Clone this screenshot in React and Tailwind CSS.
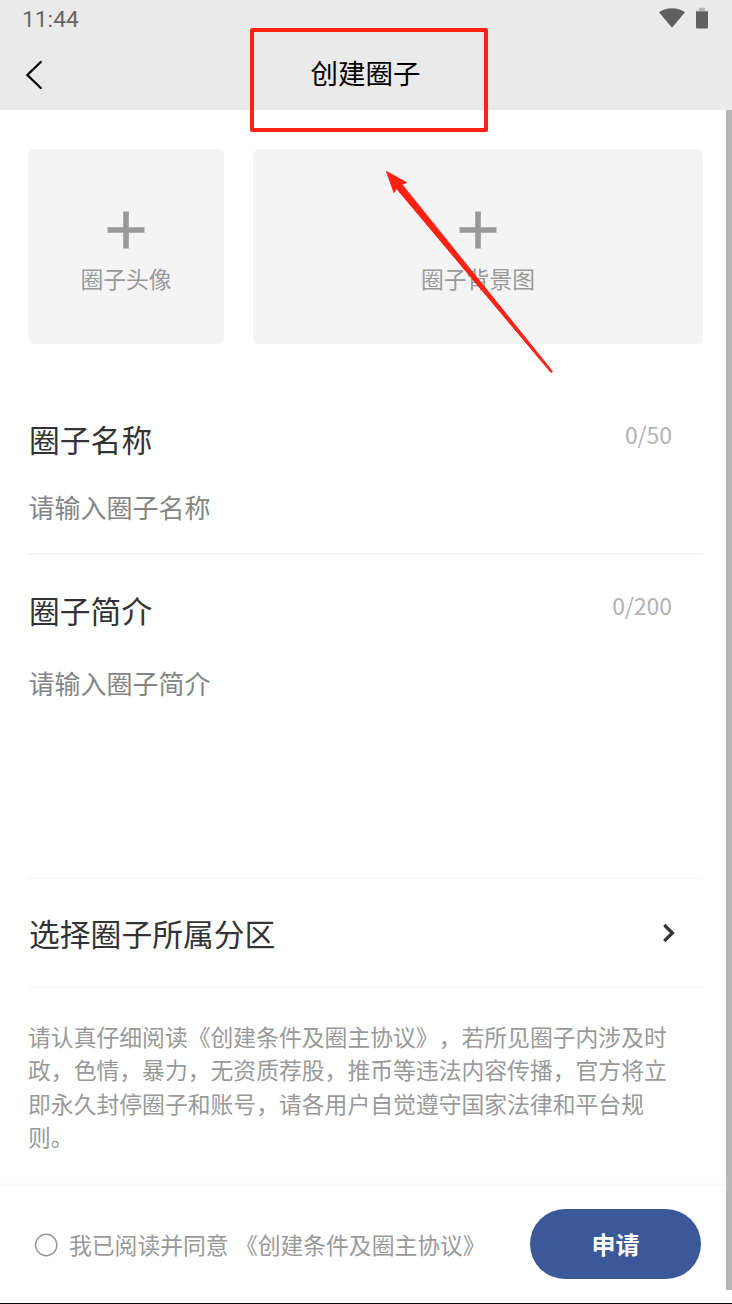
const UploadCard = ({ label, className }) => (
  <button className={`flex h-[195px] flex-col items-center rounded-md bg-[#f4f4f4] pt-[62px] text-[#999] ${className}`}>
    <svg width="38" height="38" viewBox="0 0 38 38" className="block">
      <path d="M19 .5v37M.5 19h37" stroke="#999" strokeWidth="5.6" />
    </svg>
    <span className="mt-[13px] text-[22.8px] leading-[34px]">{label}</span>
  </button>
);

const Field = ({ title, count, placeholder, className, gap }) => (
  <section className={className}>
    <div className="flex items-start justify-between pl-[1px] pr-[31px]">
      <h2 className="mt-[1px] text-[30.8px] leading-[44px] text-[#333]">{title}</h2>
      <span className="mt-[1px] text-[22.9px] leading-[34px] text-[#b2b2b2]">{count}</span>
    </div>
    <p className={`pl-[0.5px] text-[26px] leading-[38px] text-[#858585] ${gap}`}>{placeholder}</p>
  </section>
);

export default function App() {
  return (
    <div className="relative flex h-[1304px] w-[732px] flex-col overflow-hidden bg-white font-['Noto_Sans_CJK_SC',sans-serif] [text-spacing-trim:space-all]">
      <header className="h-[110px] shrink-0 bg-[#eaeaea]">
        <div className="flex h-[38px] items-center justify-between pl-[22px] pr-[24px]">
          <span className="mt-[2px] font-['Roboto',sans-serif] text-[22.8px] leading-[26px] text-[#666]">11:44</span>
          <div className="flex items-center gap-[11px]">
            <svg width="26" height="22" viewBox="0 0 26 22">
              <path d="M0 4.300C7.500-1 18.500-1 26 4.300L13 19.700Z" fill="#606060" />
            </svg>
            <svg width="12" height="24" viewBox="0 0 12 24">
              <path d="M3 .800h6v3h3v3H0v-3h3z" fill="#b5b5b5" />
              <path d="M0 4.500h12v16q0 1-1 1H1q-1 0-1-1z" fill="#606060" />
            </svg>
          </div>
        </div>
        <div className="grid h-[67px] grid-cols-[60px_1fr_61px] items-center">
          <svg width="18" height="30" viewBox="0 0 18 30" className="ml-[25px] mt-[6px]">
            <path d="M15.800 2 2.400 15 15.800 28" fill="none" stroke="#000" strokeWidth="2.300" strokeLinecap="round" />
          </svg>
          <h1 className="text-center text-[27.5px] leading-[40px] text-black">创建圈子</h1>
        </div>
      </header>

      <main className="flex h-[1071px] shrink-0 flex-col pl-[28px] pr-[29px] pt-[39px]">
        <div className="flex gap-[29px]">
          <UploadCard label="圈子头像" className="w-[196px]" />
          <UploadCard label="圈子背景图" className="flex-1" />
        </div>
        <Field title="圈子名称" count="0/50" placeholder="请输入圈子名称" className="mt-[72px] h-[139px] border-b-2 border-[#f4f4f4]" gap="mt-[27px]" />
        <Field title="圈子简介" count="0/200" placeholder="请输入圈子简介" className="h-[324px] border-b border-[#f1f1f1] pt-[32px]" gap="mt-[32px]" />
        <div className="flex h-[109px] items-center justify-between border-b border-[#f1f1f1] pl-[1px] pr-[27px]">
          <span className="text-[30.8px] leading-[44px] text-[#333]">选择圈子所属分区</span>
          <svg width="14" height="20" viewBox="0 0 14 20">
            <path d="M2.300 2 10.400 10 2.300 18" fill="none" stroke="#333" strokeWidth="3.200" />
          </svg>
        </div>
        <p className="mt-[32px] w-[645px] text-[22.82px] leading-[33.4px] text-[#999]">
          请认真仔细阅读《创建条件及圈主协议》，若所见圈子内涉及时政，色情，暴力，无资质荐股，推币等违法内容传播，官方将立即永久封停圈子和账号，请各用户自觉遵守国家法律和平台规则。
        </p>
      </main>

      <footer className="h-[122px] shrink-0">
        <div className="h-[5px] bg-linear-to-b from-white to-[#f5f7f7]" />
        <div className="flex h-[117px] items-center pl-[34px] pr-[31px]">
          <svg width="24" height="24" viewBox="0 0 24 24">
            <circle cx="12.200" cy="12" r="10.700" fill="none" stroke="#999" strokeWidth="1.500" />
          </svg>
          <span className="ml-[11px] flex-1 text-[22.8px] leading-[34px] text-[#999] [word-spacing:1.2px]">我已阅读并同意 《创建条件及圈主协议》</span>
          <button className="mb-[2px] h-[70px] w-[171px] rounded-full bg-[#3b5998] text-[24px] font-bold leading-[34px] text-white">申请</button>
        </div>
      </footer>
      <div className="h-px shrink-0 bg-[#0b0b14]" />

      <div className="absolute right-0 top-[110px] h-[1180px] w-[6.500px] bg-[#b7b7b7]" />
      <div className="absolute left-[250px] top-[28px] h-[104px] w-[238px] rounded-[2px] border-4 border-[#ff2114]" />
      <svg className="absolute left-[380px] top-[165px]" width="180" height="215" viewBox="380 165 180 215">
        <path d="M386.500 171.500 406.500 182.500 402 184.500 552.500 371.500 551 372.500 396.500 188.500 394 192.500Z" fill="#ff2114" stroke="#ff2114" strokeWidth="1" strokeLinejoin="round" />
      </svg>
    </div>
  );
}
